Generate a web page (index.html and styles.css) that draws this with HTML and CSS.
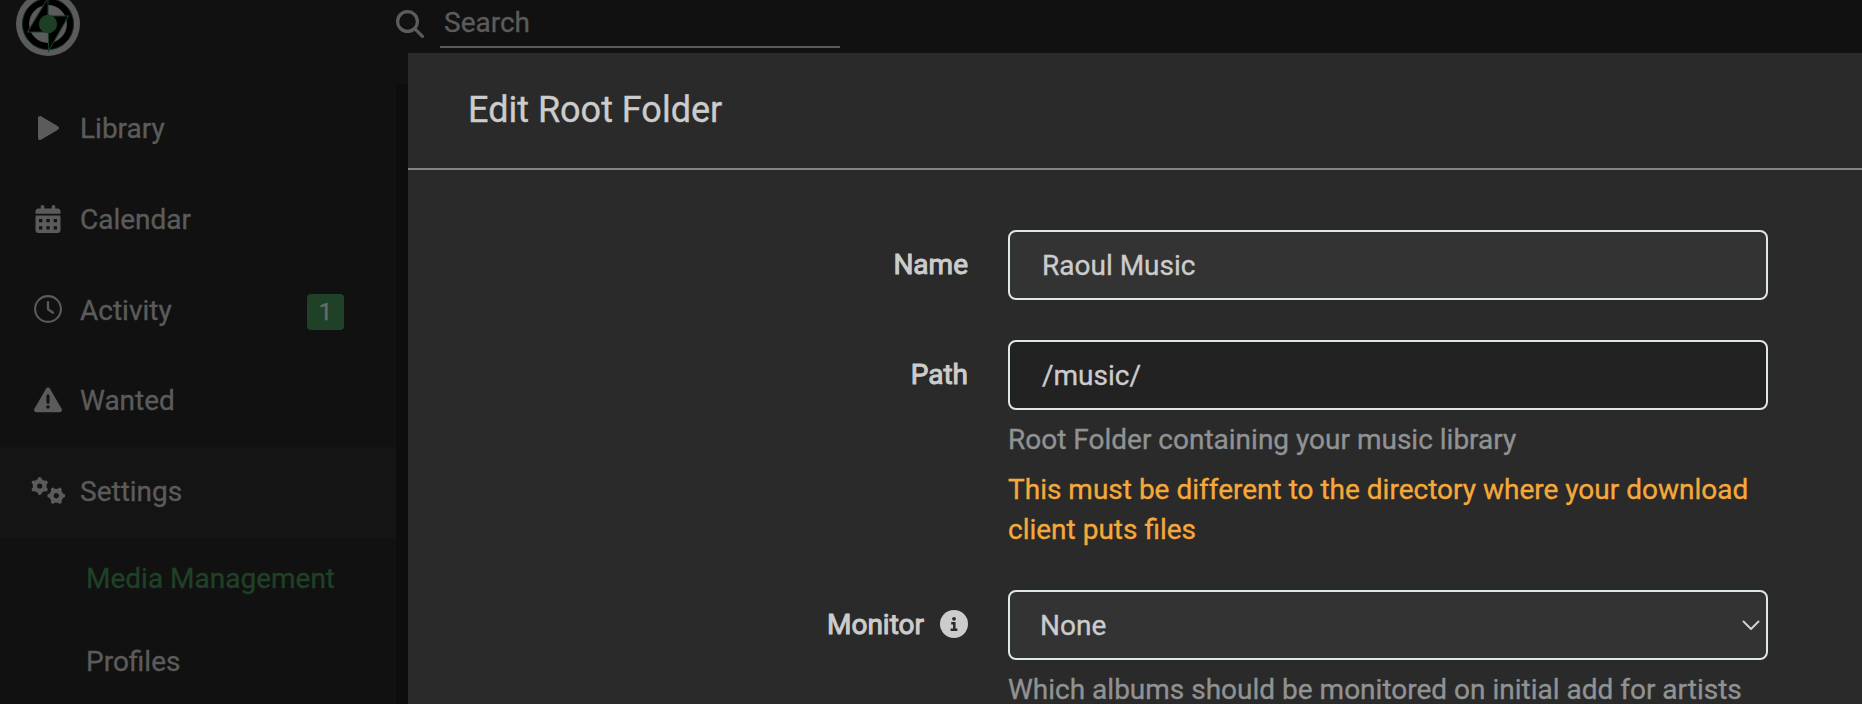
FILE: index.html
```html
<!DOCTYPE html>
<html lang="en">
<head>
<meta charset="utf-8">
<title>Edit Root Folder</title>
<link rel="stylesheet" href="styles.css">
</head>
<body>
<div class="app">
  <header class="header">
    <svg class="logo" width="64" height="64" viewBox="16 -8 64 64">
      <circle cx="48" cy="24" r="32" fill="#5b5b5b"/>
      <circle cx="48" cy="24" r="22.3" fill="none" stroke="#000" stroke-width="6.8"/>
      <circle cx="48" cy="24" r="25.6" fill="none" stroke="#15321f" stroke-width="1"/>
      <path d="M48-2V16H68.500L48.500 51V32H27.500Z" fill="#000" stroke="#1b3a25" stroke-width="1.100"/>
      <circle cx="48" cy="24" r="9.200" fill="#1e3e26"/>
    </svg>
    <div class="search">
      <svg class="search-icon" width="28" height="28" viewBox="0 0 28 28" fill="none" stroke="#5c5c5c" stroke-width="3.200" stroke-linecap="round"><circle cx="11.500" cy="11.500" r="9.900"/><path d="M18.700 18.700L26.400 26.400"/></svg>
      <div class="search-input">Search</div>
    </div>
  </header>
  <div class="body">
    <nav class="sidebar">
      <a class="item"><span class="icon"><svg width="28" height="28" viewBox="0 0 28 28" fill="currentColor"><path d="M4 4.400C4 2.400 5.700 1.500 7.400 2.500L23.600 12C25.500 13.200 25.500 14.800 23.600 16L7.400 25.600C5.700 26.600 4 25.600 4 23.700Z"/></svg></span>Library</a>
      <a class="item"><span class="icon"><svg width="28" height="28" viewBox="0 0 28 28" fill="currentColor"><path fill-rule="evenodd" d="M7.500 0C8.500 0 9.300.8 9.300 1.800V3.500H16.700V1.800A1.800 1.800 0 0 1 20.300 1.800V3.500H22.500A3 3 0 0 1 25.500 6.500V8.800H.5V6.500A3 3 0 0 1 3.500 3.500H5.700V1.800C5.700.8 6.500 0 7.500 0ZM.5 10.500H25.500V25A3 3 0 0 1 22.500 28H3.500A3 3 0 0 1 .5 25ZM4 14V17.300H7.300V14ZM11.400 14V17.300H14.700V14ZM18.700 14V17.300H22V14ZM4 21.200V24.500H7.300V21.200ZM11.400 21.200V24.500H14.700V21.200ZM18.700 21.200V24.500H22V21.200Z" transform="translate(1)"/></svg></span>Calendar</a>
      <a class="item"><span class="icon clock"><svg width="28" height="28" viewBox="0 0 28 28" fill="none" stroke="currentColor" stroke-linecap="round" stroke-linejoin="round"><circle cx="14" cy="14" r="12.900" stroke-width="2.100"/><path d="M14 7.200V14.300L19 17.700" stroke-width="2.300"/></svg></span>Activity<span class="badge">1</span></a>
      <a class="item wanted"><span class="icon"><svg width="28" height="28" viewBox="0 0 28 28" fill="currentColor"><path fill-rule="evenodd" d="M14 1.500C14.900 1.500 15.600 2 16 2.700L27.600 22.700C28.500 24.300 27.500 26.200 25.700 26.200H2.300C.5 26.200-.5 24.300.4 22.700L12 2.700C12.400 2 13.100 1.500 14 1.500ZM14 8.500C13.100 8.500 12.500 9.200 12.500 10V16.300A1.500 1.500 0 0 0 15.500 16.300V10C15.500 9.200 14.900 8.500 14 8.500ZM14 19.200A1.800 1.800 0 1 0 14 22.800A1.800 1.800 0 1 0 14 19.200Z"/></svg></span>Wanted</a>
      <a class="item selected"><span class="icon"><svg width="36" height="28" viewBox="0 0 36 28"><defs><g id="gear"><circle r="4.800" fill="none" stroke="currentColor" stroke-width="4.400"/><g stroke="currentColor" stroke-width="4" stroke-linecap="round"><path id="tooth" d="M0-6.400V-7"/><use href="#tooth" transform="rotate(60)"/><use href="#tooth" transform="rotate(120)"/><use href="#tooth" transform="rotate(180)"/><use href="#tooth" transform="rotate(240)"/><use href="#tooth" transform="rotate(300)"/></g></g></defs><use href="#gear" transform="translate(9.700 9)"/><use href="#gear" transform="translate(26.300 18.700) rotate(30)"/></svg></span>Settings</a>
      <a class="child active">Media Management</a>
      <a class="child">Profiles</a>
    </nav>
    <div class="content"></div>
  </div>
</div>
<section class="modal">
  <h1 class="title">Edit Root Folder</h1>
  <div class="form">
    <div class="group">
      <div class="label">Name</div>
      <div class="field"><div class="input">Raoul Music</div></div>
    </div>
    <div class="group">
      <div class="label">Path</div>
      <div class="field">
        <div class="input path">/music/</div>
        <div class="help">Root Folder containing your music library</div>
        <div class="help warning">This must be different to the directory where your download client puts files</div>
      </div>
    </div>
    <div class="group">
      <div class="label">Monitor<svg class="info" width="28" height="28" viewBox="0 0 28 28"><circle cx="14" cy="14" r="14" fill="#ccc"/><circle cx="14" cy="8.800" r="1.900" fill="#2a2a2a"/><path d="M11.200 13.200H14.300V19.700M10.600 19.700H17.400" fill="none" stroke="#2a2a2a" stroke-width="2.500"/></svg></div>
      <div class="field">
        <div class="input select">None<svg class="chevron" width="18" height="11" viewBox="0 0 18 11" fill="none" stroke="#d0d0d0" stroke-width="2" stroke-linecap="round" stroke-linejoin="round"><path d="M1.500 1.500L9 9L16.500 1.500"/></svg></div>
        <div class="help">Which albums should be monitored on initial add for artists</div>
      </div>
    </div>
  </div>
</section>
</body>
</html>
```
FILE: styles.css
```css
* { box-sizing: border-box; }
html, body { margin: 0; height: 100%; overflow: hidden; }
body {
  background: #111;
  color: #5b5b5b;
  font: 28px/40px Roboto, "Liberation Sans", sans-serif;
  -webkit-text-stroke: 0.35px currentColor;
}
.app { display: flex; flex-direction: column; height: 704px; }
.header { display: flex; flex: none; height: 84px; padding-left: 16px; }
.logo { flex: none; margin-top: -8px; }
.search { display: flex; margin-left: 316px; }
.search-icon { flex: none; margin-top: 10px; }
.search-input {
  width: 400px;
  height: 48px;
  margin-left: 16px;
  padding: 3px 4px 0;
  border-bottom: 2px solid #5b5b5b;
}
.body { display: flex; flex: 1; min-height: 0; }
.sidebar { width: 396px; overflow: hidden; background: #111; }
.content { flex: 1; background: #0d0d0d; }
.item {
  display: flex;
  align-items: center;
  height: 91px;
  padding: 0 52px 2px 30px;
}
.item.wanted { height: 90px; padding-bottom: 3px; }
.item.selected { background: #141414; }
.icon {
  display: flex;
  flex: none;
  justify-content: center;
  width: 36px;
  margin-right: 14px;
}
.icon svg { margin-top: -2px; }
.icon.clock svg { margin-top: -4px; }
.badge {
  width: 37px;
  height: 36px;
  margin: 2px 0 0 auto;
  border-radius: 4px;
  background: #1e4127;
  color: #6a6a6a;
  font-size: 24px;
  line-height: 36px;
  text-align: center;
}
.child {
  display: flex;
  align-items: center;
  height: 83px;
  padding: 0 0 2px 86px;
}
.child.active { color: #1e4127; }
.modal {
  position: absolute;
  top: 53px;
  left: 408px;
  width: 1454px;
  height: 651px;
  overflow: hidden;
  background: #2a2a2a;
  color: #ccc;
}
.title {
  height: 117px;
  margin: 0;
  padding: 30px 60px;
  border-bottom: 2px solid #858585;
  font-size: 36px;
  font-weight: 400;
  line-height: 54px;
}
.form { display: flex; flex-direction: column; gap: 40px; padding: 60px; }
.group { display: flex; gap: 40px; }
.label {
  display: flex;
  align-items: center;
  justify-content: flex-end;
  width: 500px;
  height: 70px;
  -webkit-text-stroke: 1px #ccc;
}
.info { margin: -2px 0 0 16px; }
.field { width: 760px; }
.input {
  display: flex;
  align-items: center;
  height: 70px;
  padding: 2px 32px 0;
  border: 2px solid #dde6e9;
  border-radius: 8px;
  background: #333;
  box-shadow: inset 0 2px 2px rgba(0, 0, 0, 0.075);
}
.input.path { background: #222; }
.input.select { justify-content: space-between; padding: 2px 6px 0 30px; }
.chevron { margin-top: -2px; }
.help { margin-top: 10px; color: #909293; }
.help.warning { color: #f5a93a; }
```
